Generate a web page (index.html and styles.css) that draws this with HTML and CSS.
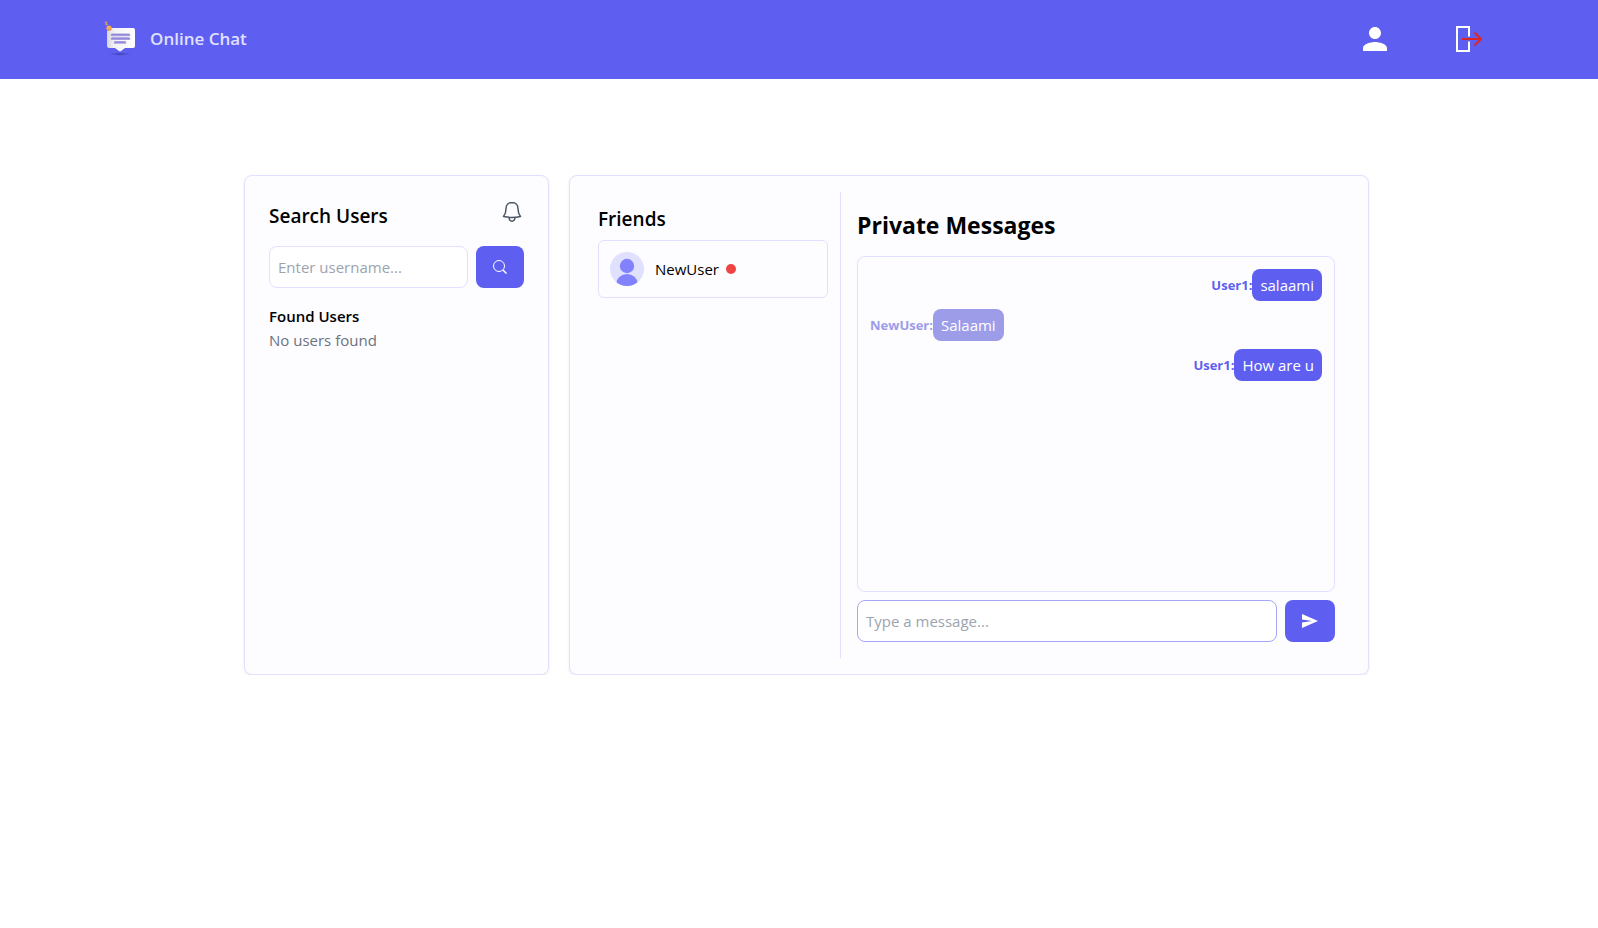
FILE: index.html
```html
<!DOCTYPE html>
<html lang="en">
<head>
<meta charset="utf-8">
<meta name="viewport" content="width=device-width, initial-scale=1">
<title>Online Chat</title>
<link rel="stylesheet" href="styles.css">
</head>
<body>
<header class="topbar">
  <a class="brand" href="#">
    <svg class="brand-logo" viewBox="0 0 32 36" aria-hidden="true">
      <defs>
        <linearGradient id="bubble" x1="0" y1="0" x2="1" y2="0"><stop offset="0" stop-color="#d4d4dc"/><stop offset=".25" stop-color="#f2f2f5"/><stop offset="1" stop-color="#ffffff"/></linearGradient>
        <radialGradient id="shade"><stop offset="0" stop-color="#34349c"/><stop offset="1" stop-color="#5e5ff0" stop-opacity="0"/></radialGradient>
      </defs>
      <ellipse cx="16" cy="33" rx="14" ry="2" fill="url(#shade)"/>
      <path d="M5 7h24q2 0 2 2v16q0 2-2 2h-8l-4 3q-1 .8-2 0l-4-3H5q-2 0-2-2V9q0-2 2-2z" fill="url(#bubble)"/>
      <path d="M8 14h17M8 17.800h17M11 21.500h10" stroke="#a99ce0" stroke-width="2.600" stroke-linecap="round" fill="none"/>
      <path d="M8 13.300h17M8 17.100h17M11 21h10" stroke="#8582d6" stroke-width="1" stroke-linecap="round" fill="none"/>
      <circle cx="5" cy="7" r="2.600" fill="#f3ac55"/>
      <path d="M3.500 9.500l3.500-1" stroke="#d98a3c" stroke-width="1" stroke-linecap="round"/>
      <path d="M.8.8l2 .7-1 1.500 1.800 1" stroke="#dfa25e" stroke-width="1.200" fill="none"/>
    </svg>
    <span>Online Chat</span>
  </a>
  <nav class="topbar-actions" aria-label="Account">
    <button class="icon-button" type="button" aria-label="Profile">
      <svg class="icon-profile" viewBox="0 0 24 24" fill="#fff"><path d="M12 12c2.210 0 4-1.790 4-4s-1.790-4-4-4-4 1.790-4 4 1.790 4 4 4zm0 2c-2.670 0-8 1.340-8 4v2h16v-2c0-2.660-5.330-4-8-4z"/></svg>
    </button>
    <button class="icon-button" type="button" aria-label="Log out">
      <svg class="icon-logout" viewBox="0 0 28 28" fill="none" stroke-width="2"><path d="M14 11.500V2H2v24h12v-9.500" stroke="#fff"/><path d="M7 14h19M19.500 7.500L26 14l-6.500 6.500" stroke="#dc2626"/></svg>
    </button>
  </nav>
</header>

<main class="workspace">
  <section class="card search-card">
    <div class="search-head">
      <h2 class="section-title">Search Users</h2>
      <button class="icon-button" type="button" aria-label="Notifications">
        <svg class="icon-bell" viewBox="0 0 20 22" fill="none" stroke="#4b5563" stroke-width="1.500" stroke-linejoin="round"><path d="M10 1.500c-3.800 0-6 2.700-6 6.300 0 4-.7 5.600-2.500 7.700Q10 17.300 18.500 15.500C16.700 13.400 16 11.800 16 7.800c0-3.600-2.200-6.300-6-6.300z"/><path d="M7 16.500c.2 2.300 1.300 3.700 3 3.700s2.800-1.400 3-3.700"/></svg>
      </button>
    </div>
    <form class="field-row">
      <input class="text-field" type="text" placeholder="Enter username..." aria-label="Username">
      <button class="solid-button" type="button" aria-label="Search">
        <svg class="icon-action" viewBox="0 0 16 16" fill="none" stroke="#fff"><circle cx="7" cy="7" r="5.500"/><path d="M11 11l3.500 3.500" stroke-width="1.500"/></svg>
      </button>
    </form>
    <h3 class="found-title">Found Users</h3>
    <p class="found-empty">No users found</p>
  </section>

  <section class="card chat-card">
    <aside class="friends">
      <h2 class="section-title">Friends</h2>
      <ul class="friend-list">
        <li>
          <button class="friend" type="button">
            <svg class="avatar" viewBox="0 0 34 34" aria-hidden="true"><clipPath id="round"><circle cx="17" cy="17" r="17"/></clipPath><g clip-path="url(#round)"><path d="M0 0h34v34H0z" fill="#e0e0ff"/><circle cx="17" cy="14" r="7.200" fill="#8282ff"/><ellipse cx="17" cy="31" rx="10.500" ry="9" fill="#8282ff"/></g></svg>
            <span>NewUser</span>
            <span class="status-dot"></span>
          </button>
        </li>
      </ul>
    </aside>
    <div class="conversation">
      <h1 class="chat-title">Private Messages</h1>
      <div class="message-log">
        <div class="message own"><span class="sender">User1:</span><span class="bubble">salaami</span></div>
        <div class="message"><span class="sender">NewUser:</span><span class="bubble">Salaami</span></div>
        <div class="message own"><span class="sender">User1:</span><span class="bubble">How are u</span></div>
      </div>
      <form class="field-row">
        <input class="text-field strong" type="text" placeholder="Type a message..." aria-label="Message">
        <button class="solid-button" type="button" aria-label="Send">
          <svg class="icon-action" viewBox="0 0 16 16" fill="#fff"><path d="M0 1l16 7-16 7V9.500L10 8 0 6.500z"/></svg>
        </button>
      </form>
    </div>
  </section>
</main>
</body>
</html>
```
FILE: styles.css
```css
* { box-sizing: border-box; }
body, h1, h2, h3, p, ul { margin: 0; padding: 0; }
body {
  background: #fff;
  color: #000;
  font-family: "Segoe UI", "Open Sans", "Noto Sans", sans-serif;
  font-size: 15px;
  line-height: 24px;
}
button, input { font: inherit; color: inherit; }
button { border: 0; padding: 0; background: none; cursor: pointer; }
svg { display: block; }
ul { list-style: none; }

.topbar {
  display: flex;
  align-items: center;
  justify-content: space-between;
  min-height: 79px;
  padding: 0 115px 2px 104px;
  background: #5e5ff0;
}
.brand {
  display: flex;
  align-items: center;
  gap: 14px;
  color: #e0e0ff;
  font-size: 17px;
  font-weight: 600;
  text-decoration: none;
}
.brand-logo { width: 32px; height: 36px; }
.topbar-actions { display: flex; align-items: center; gap: 62px; }
.icon-button { flex: none; }
.icon-profile { width: 36px; height: 36px; }
.icon-logout { width: 28px; height: 28px; }

.workspace {
  display: grid;
  grid-template-columns: minmax(0, 305fr) minmax(0, 800fr);
  gap: 20px;
  margin: 96px 229px 0 244px;
}
.card {
  min-height: 500px;
  border: 1px solid #e0e0ff;
  border-radius: 8px;
  background: #fdfdff;
  box-shadow: 0 1px 3px rgba(0, 0, 0, 0.08);
}
.search-card { padding: 24px; }
.search-head {
  display: flex;
  justify-content: space-between;
  align-items: flex-start;
  height: 46px;
}
.search-head .section-title { padding-top: 2px; }
.section-title { font-size: 19px; line-height: 28px; font-weight: 600; }
.icon-bell { width: 20px; height: 22px; margin: 1px 2px 0 0; }

.field-row { display: flex; align-items: stretch; gap: 8px; }
.text-field {
  flex: 1;
  min-width: 0;
  height: 42px;
  padding: 8px;
  border: 1px solid #e0e0ff;
  border-radius: 8px;
  background: #fff;
}
.text-field.strong { border-color: #a5a6f6; }
.text-field::placeholder { color: #9ca3af; }
.solid-button {
  display: flex;
  align-items: center;
  justify-content: center;
  width: 48px;
  border-radius: 8px;
  background: #5e5ff0;
}
.icon-action { width: 16px; height: 16px; }
.found-title { margin-top: 16px; font-size: 15px; font-weight: 600; }
.found-empty { color: #6b7280; }

.chat-card {
  display: grid;
  grid-template-columns: 255px minmax(0, 1fr);
  padding: 16px;
}
.friends { padding: 13px 12px 0; border-right: 1px solid #e0e0ff; }
.friend-list { margin-top: 7px; }
.friend {
  display: flex;
  align-items: center;
  width: 100%;
  padding: 11px;
  border: 1px solid #e0e0ff;
  border-radius: 6px;
}
.avatar { width: 34px; height: 34px; margin-right: 11px; }
.status-dot {
  width: 10px;
  height: 10px;
  margin-left: 7px;
  border-radius: 50%;
  background: #ef4444;
}

.conversation {
  display: flex;
  flex-direction: column;
  padding: 17px 17px 16px 16px;
}
.chat-title { font-size: 23px; line-height: 32px; font-weight: 700; }
.message-log {
  display: flex;
  flex-direction: column;
  flex: 1;
  gap: 8px;
  margin: 15px 0 8px;
  padding: 12px;
  border: 1px solid #e0e0ff;
  border-radius: 8px;
}
.message { display: flex; align-items: center; color: #9c9ce8; }
.message.own { justify-content: flex-end; color: #5e5ff0; }
.sender { font-size: 13px; font-weight: 700; }
.bubble {
  padding: 4px 8px;
  border-radius: 8px;
  background: #9c9ce8;
  color: #fff;
}
.own .bubble { background: #5e5ff0; }
.conversation .solid-button { width: 50px; }
```
